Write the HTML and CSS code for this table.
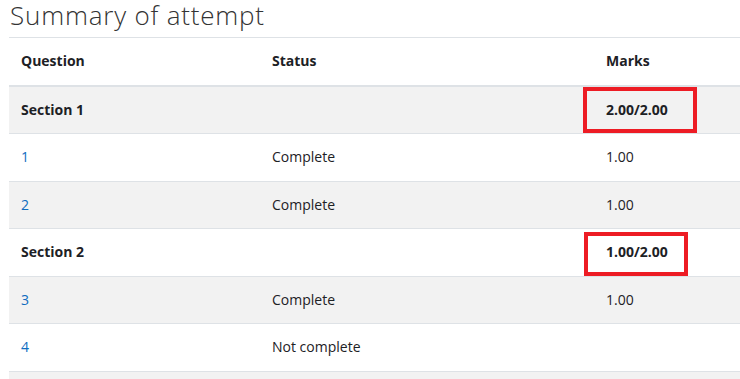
FILE: index.html
```html
<!DOCTYPE html>
<html lang="en">
<head>
<meta charset="utf-8">
<title>Summary of attempt</title>
<link rel="stylesheet" href="styles.css">
</head>
<body>
<div class="page">
  <h2 class="title">Summary of attempt</h2>
  <table class="summary">
    <colgroup>
      <col class="c1"><col class="c2"><col class="c3">
    </colgroup>
    <thead>
      <tr><th>Question</th><th>Status</th><th>Marks</th></tr>
    </thead>
    <tbody>
      <tr class="section"><td>Section 1</td><td></td><td><span class="hl hl1">2.00/2.00</span></td></tr>
      <tr><td><a href="#">1</a></td><td>Complete</td><td>1.00</td></tr>
      <tr><td><a href="#">2</a></td><td>Complete</td><td>1.00</td></tr>
      <tr class="section"><td>Section 2</td><td></td><td><span class="hl hl2">1.00/2.00</span></td></tr>
      <tr><td><a href="#">3</a></td><td>Complete</td><td>1.00</td></tr>
      <tr><td><a href="#">4</a></td><td>Not complete</td><td></td></tr>
      <tr><td>&nbsp;</td><td></td><td></td></tr>
    </tbody>
  </table>
</div>
</body>
</html>
```
FILE: styles.css
```css
html, body {
  margin: 0;
  padding: 0;
  background: #fff;
  overflow: hidden;
}
.page {
  padding-left: 9px;
  font-family: "Open Sans", "Noto Sans", sans-serif;
  color: #1d2125;
}
.title {
  margin: 0;
  padding: 0 0 0 1px;
  height: 37px;
  box-sizing: border-box;
  font-weight: 300;
  font-size: 26px;
  line-height: 30px;
  letter-spacing: 0.8px;
  color: #333;
}
.summary {
  width: 760px;
  border-collapse: collapse;
  table-layout: fixed;
  font-size: 14px;
  line-height: 22.5px;
}
.c1 { width: 251px; }
.c2 { width: 334px; }
.c3 { width: 175px; }
.summary th, .summary td {
  padding: 12px;
  text-align: left;
  vertical-align: top;
  border-top: 1px solid #dee2e6;
}
.summary th {
  font-weight: 700;
  border-bottom: 2px solid #dee2e6;
}
.summary tbody tr:nth-child(odd) {
  background: #f2f2f2;
}
.section td {
  font-weight: 700;
}
.summary a {
  color: #0f6cbf;
  text-decoration: none;
}
.hl {
  display: inline-block;
  box-sizing: border-box;
  border: 4px solid #ed1c24;
  line-height: 22.5px;
  white-space: nowrap;
}
.hl1 {
  width: 114px;
  padding: 8px 0 7.5px 19px;
  margin: -12px -40px -11.5px -23px;
}
.hl2 {
  width: 104px;
  padding: 5px 0 8.5px 18px;
  margin: -9px -40px -12.5px -22px;
}
```
